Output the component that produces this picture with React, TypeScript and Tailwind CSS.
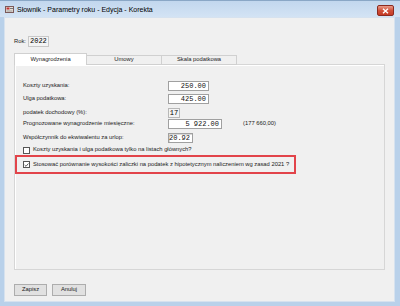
import React from "react";

const F = { fontFamily: '"Liberation Sans", Arial, sans-serif' };
const MONO = { fontFamily: '"Liberation Mono", "Courier New", monospace' };

function Box({ w, value }: { w: number; value: string }) {
  return (
    <div
      className="h-[10px] flex items-center justify-end pr-[2px] border border-[#a0a0a0] bg-white"
      style={{ width: w }}
    >
      <span className="text-[7px] leading-none text-[#111]" style={MONO}>{value}</span>
    </div>
  );
}

function Check({ checked }: { checked?: boolean }) {
  return (
    <div className="w-[7px] h-[7px] border border-[#555] bg-white flex items-center justify-center shrink-0">
      {checked && (
        <svg width="6" height="6" viewBox="0 0 6 6">
          <path d="M0.8 3 L2.4 4.6 L5.3 1.2" fill="none" stroke="#222" strokeWidth="0.9" />
        </svg>
      )}
    </div>
  );
}

function Row({ label, children, mt }: { label: string; children: React.ReactNode; mt: string }) {
  return (
    <div className={`flex items-center h-[10px] ${mt}`}>
      <div className="w-[145px] text-[5.8px] leading-none text-[#1a1a1a] whitespace-nowrap">{label}</div>
      {children}
    </div>
  );
}

export default function App() {
  return (
    <div className="w-[400px] h-[306px] bg-[#b9d1ea] flex flex-col overflow-hidden" style={F}>
      {/* title bar */}
      <div className="h-[17px] flex items-center relative bg-gradient-to-b from-[#c2d7ee] to-[#d3e3f4] border-t border-[#8aa7c6]">
        <svg className="ml-[5px]" width="9" height="7" viewBox="0 0 9 7">
          <rect x="0.5" y="0.5" width="8" height="6" fill="#e8e0d8" stroke="#7a5a5a" />
          <rect x="1.5" y="1.5" width="3" height="2" fill="#c03030" />
          <rect x="5" y="2" width="3" height="1" fill="#777" />
          <rect x="1.5" y="4.5" width="6" height="1" fill="#999" />
        </svg>
        <span className="ml-[3px] text-[7px] leading-none text-black">Słownik - Parametry roku - Edycja - Korekta</span>
        <div className="absolute left-[377px] top-[4px] w-[17px] h-[11px] rounded-[2px] border border-[#8a2a20] bg-gradient-to-b from-[#e89a8a] via-[#d0503a] to-[#c53a25] flex items-center justify-center">
          <svg width="7" height="6" viewBox="0 0 7 6">
            <path d="M1 0.8 L6 5.2 M6 0.8 L1 5.2" stroke="#fff" strokeWidth="1.4" />
          </svg>
        </div>
      </div>
      {/* frame + client */}
      <div className="flex-1 flex pl-[4px] pr-[5px] pb-[4px]">
        <div className="flex-1 bg-[#f0f0f0] border border-[#d6e2ef] flex flex-col px-[9px]">
          {/* Rok */}
          <div className="flex items-center mt-[18px] h-[11px]">
            <span className="text-[5.8px] leading-none text-[#1a1a1a]">Rok:</span>
            <div className="ml-[2px] w-[21px] h-[11px] border border-[#c8c8c8] bg-[#f4f4f4] flex items-center justify-center">
              <span className="text-[7px] leading-none" style={MONO}>2022</span>
            </div>
          </div>
          {/* tabs */}
          <div className="flex items-end mt-[6px] h-[12px] relative z-10">
            <div className="w-[73px] h-[12px] bg-white border border-b-0 border-[#d0d0d0] flex items-center justify-center">
              <span className="text-[5.8px] leading-none text-[#1a1a1a]">Wynagrodzenia</span>
            </div>
            <div className="w-[75px] h-[10px] bg-[#f0f0f0] border border-l-0 border-[#d0d0d0] flex items-center justify-center">
              <span className="text-[5.8px] leading-none text-[#1a1a1a]">Umowy</span>
            </div>
            <div className="w-[75px] h-[10px] bg-[#f0f0f0] border border-l-0 border-[#d0d0d0] flex items-center justify-center">
              <span className="text-[5.8px] leading-none text-[#1a1a1a]">Skala podatkowa</span>
            </div>
          </div>
          {/* panel */}
          <div className="h-[206px] border border-[#d6d6d6] bg-[#f0f0f0] flex flex-col pl-[8px] -mt-[1px] shadow-[inset_1px_1px_0_#ffffff]">
            <Row label="Koszty uzyskania:" mt="mt-[16px]">
              <Box w={41} value="250.00" />
            </Row>
            <Row label="Ulga podatkowa:" mt="mt-[3px]">
              <Box w={41} value="425.00" />
            </Row>
            <Row label="podatek dochodowy (%):" mt="mt-[4px]">
              <div className="w-[12px] h-[10px] border border-[#b8b8b8] bg-[#f4f4f4] flex items-center justify-center">
                <span className="text-[7px] leading-none" style={MONO}>17</span>
              </div>
            </Row>
            <Row label="Prognozowane wynagrodzenie miesięczne:" mt="mt-[1px]">
              <Box w={54} value="5 922.00" />
              <span className="ml-[21px] text-[5.8px] leading-none text-[#1a1a1a]">(177 660,00)</span>
            </Row>
            <Row label="Współczynnik do ekwiwalentu za urlop:" mt="mt-[4px]">
              <div className="w-[25px] h-[10px] border border-[#a0a0a0] bg-white flex items-center justify-end pr-[2px] shadow-[inset_1px_1px_0_#d8d8d8]">
                <span className="text-[7px] leading-none text-[#111]" style={MONO}>20.92</span>
              </div>
            </Row>
            <div className="flex items-center h-[10px] mt-[2px] gap-[3px]">
              <Check />
              <span className="text-[5.8px] leading-none text-[#1a1a1a] whitespace-nowrap">Koszty uzyskania i ulga podatkowa tylko na listach głównych?</span>
            </div>
            <div className="ml-[-8px] w-[281px] h-[19px] border-2 border-[#e2444a] flex items-center pl-[6px] gap-[3px]">
              <Check checked />
              <span className="text-[5.8px] leading-none text-[#1a1a1a] whitespace-nowrap">Stosować porównanie wysokości zaliczki na podatek z hipotetycznym naliczeniem wg zasad 2021 ?</span>
            </div>
          </div>
          {/* buttons */}
          <div className="flex gap-[5px] mt-[14px]">
            <div className="w-[33px] h-[12px] border border-[#adadad] bg-[#e1e1e1] flex items-center justify-center">
              <span className="text-[5.8px] leading-none text-[#1a1a1a]">Zapisz</span>
            </div>
            <div className="w-[34px] h-[12px] border border-[#adadad] bg-[#e1e1e1] flex items-center justify-center">
              <span className="text-[5.8px] leading-none text-[#1a1a1a]">Anuluj</span>
            </div>
          </div>
        </div>
      </div>
    </div>
  );
}
